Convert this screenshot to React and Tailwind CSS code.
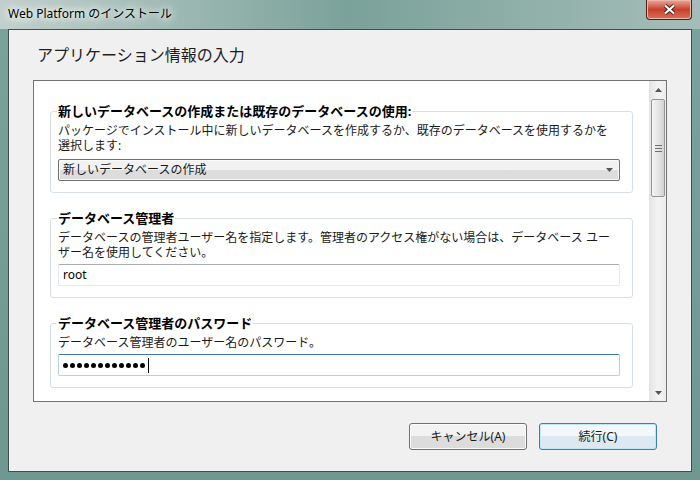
import React from 'react';

const FONT = "font-['Noto_Sans','Noto_Sans_CJK_JP',sans-serif]";

function Group({ title, lines, children, first }) {
  return (
    <fieldset
      className={`border border-[#d5dfe5] rounded-[3px] pl-[7px] pr-[12px] pb-[11px] ${first ? '' : 'mt-[17px]'}`}
    >
      <legend className="px-[1px] -ml-[1px] text-[13px] leading-[16px] font-bold text-black">{title}</legend>
      <div className="pt-[4px] text-[12px] leading-[15px] text-[#1a1a1a] whitespace-nowrap">
        {lines.map((l, i) => (
          <div key={i}>{l}</div>
        ))}
      </div>
      {children}
    </fieldset>
  );
}

function Arrow({ down }) {
  return (
    <svg width="7" height="4" viewBox="0 0 7 4">
      {down ? <path d="M0 0H7L3.5 4Z" fill="#555" /> : <path d="M0 4H7L3.5 0Z" fill="#555" />}
    </svg>
  );
}

function ScrollBar() {
  return (
    <div className="w-[17px] flex flex-col bg-gradient-to-r from-[#e6e6e6] via-[#f3f3f3] to-[#ececec] border-l border-[#e3e3e3]">
      <div className="h-[17px] flex items-center justify-center">
        <Arrow />
      </div>
      <div className="flex-1 px-[1px] pt-[1px]">
        <div className="h-[98px] rounded-[2px] border border-[#979797] bg-gradient-to-r from-[#f4f4f4] via-[#e6e6e6] to-[#d3d3d3] flex flex-col items-center justify-center gap-[2px]">
          <div className="w-[7px] h-px bg-[#707070]" />
          <div className="w-[7px] h-px bg-[#707070]" />
          <div className="w-[7px] h-px bg-[#707070]" />
        </div>
      </div>
      <div className="h-[17px] flex items-center justify-center">
        <Arrow down />
      </div>
    </div>
  );
}

function Button({ label, focused }) {
  return (
    <button
      className={`w-[118px] h-[27px] rounded-[3px] border text-[12px] text-[#1a1a1a] ${
        focused
          ? 'border-[#3c7fb1] bg-gradient-to-b from-[#f2f7fb] from-50% to-[#dde8f1] to-50% shadow-[inset_0_0_0_1px_#bfe6f8]'
          : 'border-[#707070] bg-gradient-to-b from-[#f2f2f2] from-50% to-[#dcdcdc] to-50% shadow-[inset_0_0_0_1px_#fbfbfb]'
      }`}
    >
      {label}
    </button>
  );
}

export default function App() {
  return (
    <div className={`w-[700px] h-[480px] flex flex-col bg-gradient-to-b from-[#7aa39b] to-[#6e978f] ${FONT}`}>
      <div className="h-[29px] flex items-start justify-between bg-gradient-to-r from-[#c2d0cd] via-[#7aa29a] to-[#a5bdb8] pl-[8px] pr-[8px]">
        <div className="mt-[6px] text-[12px] leading-[16px] text-black [text-shadow:0_0_6px_#fff,0_0_10px_#fff,0_0_14px_#e8f0ee]">
          Web Platform のインストール
        </div>
        <div className="w-[46px] h-[20px] rounded-b-[4px] border border-t-0 border-[#4b2119] bg-gradient-to-b from-[#e8a89c] via-[#c7402c] to-[#d8705c] flex items-center justify-center shadow-[inset_0_0_0_1px_#f0b6aa]">
          <svg width="13" height="11" viewBox="0 0 13 11">
            <path d="M2 1.5L11 9.5M11 1.5L2 9.5" stroke="#4a1c14" strokeWidth="4" />
            <path d="M2 1.5L11 9.5M11 1.5L2 9.5" stroke="#fff" strokeWidth="2.2" />
          </svg>
        </div>
      </div>

      <div className="mx-[8px] mb-[8px] flex-1 border border-[#3e4f4c] bg-[#f0f0f0] flex flex-col">
        <div className="pt-[14px] pl-[28px] text-[16px] leading-[22px] text-[#1e1e1e]">アプリケーション情報の入力</div>

        <div className="mt-[14px] mx-[24px] h-[322px] border border-[#737373] bg-white flex overflow-hidden">
          <div className="flex-1 pl-[16px] pr-[16px] pt-[22px] overflow-hidden">
            <Group
              first
              title="新しいデータベースの作成または既存のデータベースの使用:"
              lines={[
                'パッケージでインストール中に新しいデータベースを作成するか、既存のデータベースを使用するかを',
                '選択します:',
              ]}
            >
              <div className="mt-[6px] h-[22px] rounded-[2px] border border-[#707070] bg-gradient-to-b from-[#f2f2f2] from-50% to-[#dddddd] to-50% shadow-[inset_0_0_0_1px_#fafafa] flex items-center justify-between pl-[4px] pr-[6px] text-[12px] text-[#1a1a1a]">
                <span>新しいデータベースの作成</span>
                <Arrow down />
              </div>
            </Group>

            <Group
              title="データベース管理者"
              lines={[
                'データベースの管理者ユーザー名を指定します。管理者のアクセス権がない場合は、データベース ユー',
                'ザー名を使用してください。',
              ]}
            >
              <div className="mt-[4px] h-[22px] rounded-[2px] border border-[#e3e9ef] border-t-[#abadb3] bg-white flex items-center pl-[4px] text-[12px] text-black">
                root
              </div>
            </Group>

            <Group title="データベース管理者のパスワード" lines={['データベース管理者のユーザー名のパスワード。']}>
              <div className="mt-[4px] h-[22px] rounded-[2px] border border-[#b5cfe7] border-t-[#3d7bad] bg-white flex items-center pl-[4px] gap-[2px]">
                {Array.from({ length: 12 }).map((_, i) => (
                  <span key={i} className="w-[5px] h-[5px] rounded-full bg-black" />
                ))}
                <span className="ml-[1px] w-px h-[15px] bg-black" />
              </div>
            </Group>
          </div>
          <ScrollBar />
        </div>

        <div className="mt-[21px] flex justify-end gap-[12px] pr-[34px]">
          <Button label="キャンセル(A)" />
          <Button label="続行(C)" focused />
        </div>
      </div>
    </div>
  );
}
